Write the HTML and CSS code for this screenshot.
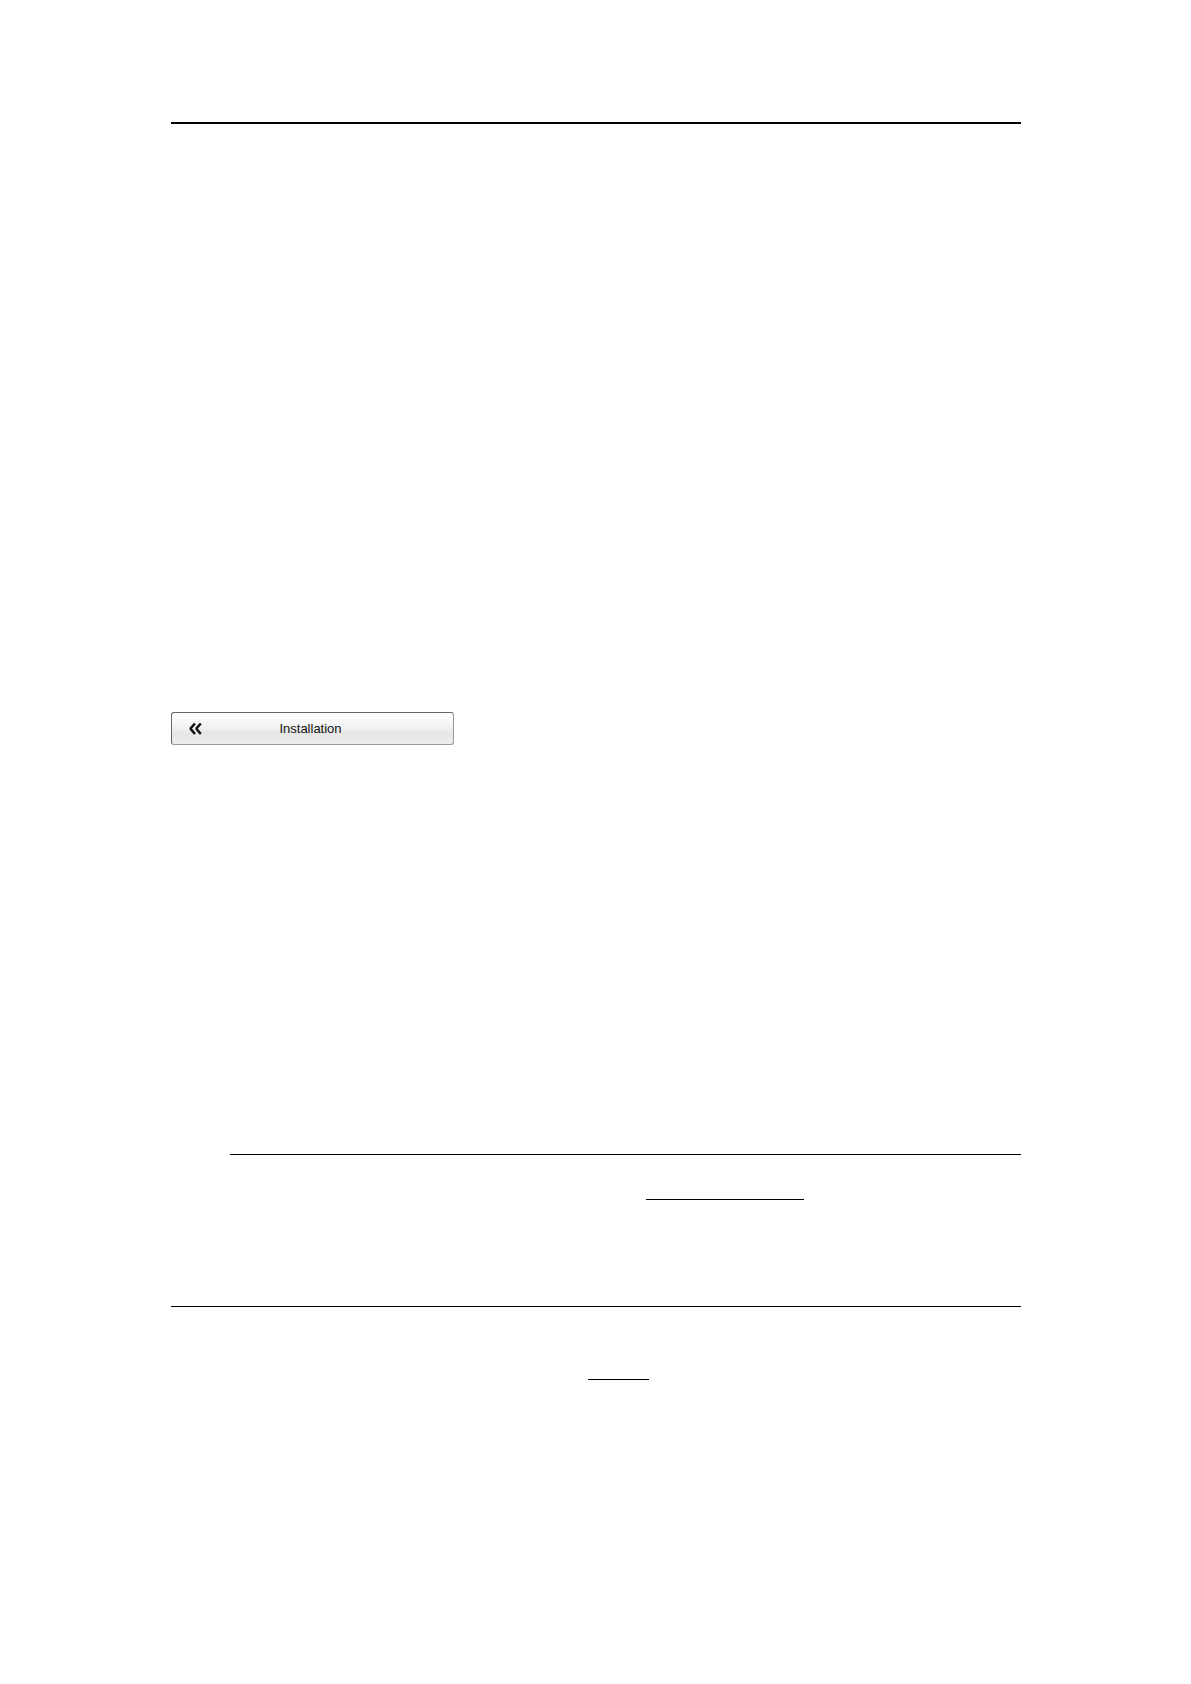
FILE: index.html
```html
<!DOCTYPE html>
<html lang="en">
<head>
<meta charset="utf-8">
<title>Installation</title>
<link rel="stylesheet" href="styles.css">
</head>
<body>
<main class="page">
  <hr class="rule rule-heavy">
  <button class="menu-button" type="button">
    <svg class="menu-icon" width="14" height="14" viewBox="0 0 14 14" aria-hidden="true">
      <path d="M6 1.5 1.8 6.2v.8L6 12M11.8 1.5 7.6 6.2v.8l4.2 5" fill="none" stroke="#111" stroke-width="2.5"/>
    </svg>
    <span class="menu-label">Installation</span>
  </button>
  <hr class="rule rule-indented">
  <hr class="rule rule-reference">
  <hr class="rule rule-section">
  <hr class="rule rule-link">
</main>
</body>
</html>
```

FILE: styles.css
```css
body {
  margin: 0;
  background: #fff;
  font-family: "Liberation Sans", Arial, sans-serif;
}

.page {
  display: flex;
  flex-direction: column;
  box-sizing: border-box;
  min-height: 100vh;
  padding: 122px 170px 122px 171px;
}

.rule {
  align-self: stretch;
  height: 1px;
  margin: 0;
  border: 0;
  background: #000;
}

.rule-heavy {
  height: 2px;
}

.menu-button {
  display: flex;
  align-items: center;
  box-sizing: border-box;
  width: 283px;
  height: 33px;
  margin: 588px 0 0;
  padding: 0 35px 0 17px;
  border: 1px solid #999;
  border-top-color: #666;
  border-left-color: #666;
  border-radius: 3px;
  background: linear-gradient(#fff 0%, #f2f2f2 45%, #e6e6e6 65%, #ececec 100%);
  color: #111;
  font: 13px/16px "Liberation Sans", Arial, sans-serif;
}

.menu-label {
  flex: 1;
  text-align: center;
}

.rule-indented {
  margin: 409px 0 0 59px;
}

.rule-reference {
  align-self: flex-start;
  width: 158px;
  margin: 44px 0 0 475px;
}

.rule-section {
  margin-top: 106px;
}

.rule-link {
  align-self: flex-start;
  width: 61px;
  margin: 72px 0 0 417px;
}
```
